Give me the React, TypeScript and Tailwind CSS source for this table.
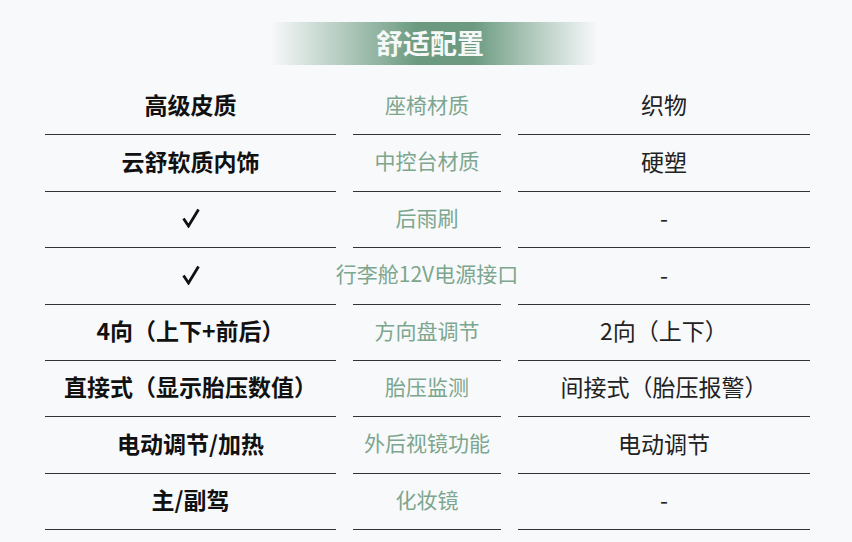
const rows: [string, string, string][] = [
  ["高级皮质", "座椅材质", "织物"],
  ["云舒软质内饰", "中控台材质", "硬塑"],
  ["check", "后雨刷", "-"],
  ["check", "行李舱12V电源接口", "-"],
  ["4向（上下+前后）", "方向盘调节", "2向（上下）"],
  ["直接式（显示胎压数值）", "胎压监测", "间接式（胎压报警）"],
  ["电动调节/加热", "外后视镜功能", "电动调节"],
  ["主/副驾", "化妆镜", "-"],
];

function Check() {
  return (
    <svg width="20" height="20" viewBox="0 0 20 20" className="mt-[2px]">
      <path d="M2.5 10.5 L7.5 18 L17.5 1.5" fill="none" stroke="#111" strokeWidth="2.8" strokeLinejoin="miter" />
    </svg>
  );
}

export default function App() {
  return (
    <main
      className="w-[852px] h-[542px] overflow-hidden bg-[#f8f9fb] text-[#222]"
      style={{ fontFamily: '"Noto Sans CJK SC", "Noto Sans", sans-serif' }}
    >
      <div className="pt-[22px] pl-[270px]">
        <div className="w-[328px] h-[43px] flex items-center justify-center bg-[linear-gradient(to_right,rgba(107,154,128,0)_0%,rgba(107,154,128,0.55)_25%,#6b9a80_45%,#6b9a80_62%,rgba(107,154,128,0.5)_80%,rgba(107,154,128,0)_100%)]">
          <span className="text-[27px] font-bold text-[#f5f8f6] -ml-[8px]">舒适配置</span>
        </div>
      </div>

      <div className="mt-[14px] ml-[45px] grid grid-cols-[291px_148px_292px] gap-x-[17px]">
        {rows.map(([a, b, c], i) => (
          <div key={i} className="contents">
            <div className="h-[56.4px] border-b border-[#333] flex items-center justify-center pb-[4px] text-[23px] font-bold text-[#111] whitespace-nowrap">
              {a === "check" ? <Check /> : a}
            </div>
            <div className="h-[56.4px] border-b border-[#333] flex items-center justify-center pb-[4px] text-[21px] text-[#7ca68e] whitespace-nowrap">
              {b}
            </div>
            <div className="h-[56.4px] border-b border-[#333] flex items-center justify-center pb-[4px] text-[23px] text-[#222] whitespace-nowrap">
              {c}
            </div>
          </div>
        ))}
      </div>
    </main>
  );
}
